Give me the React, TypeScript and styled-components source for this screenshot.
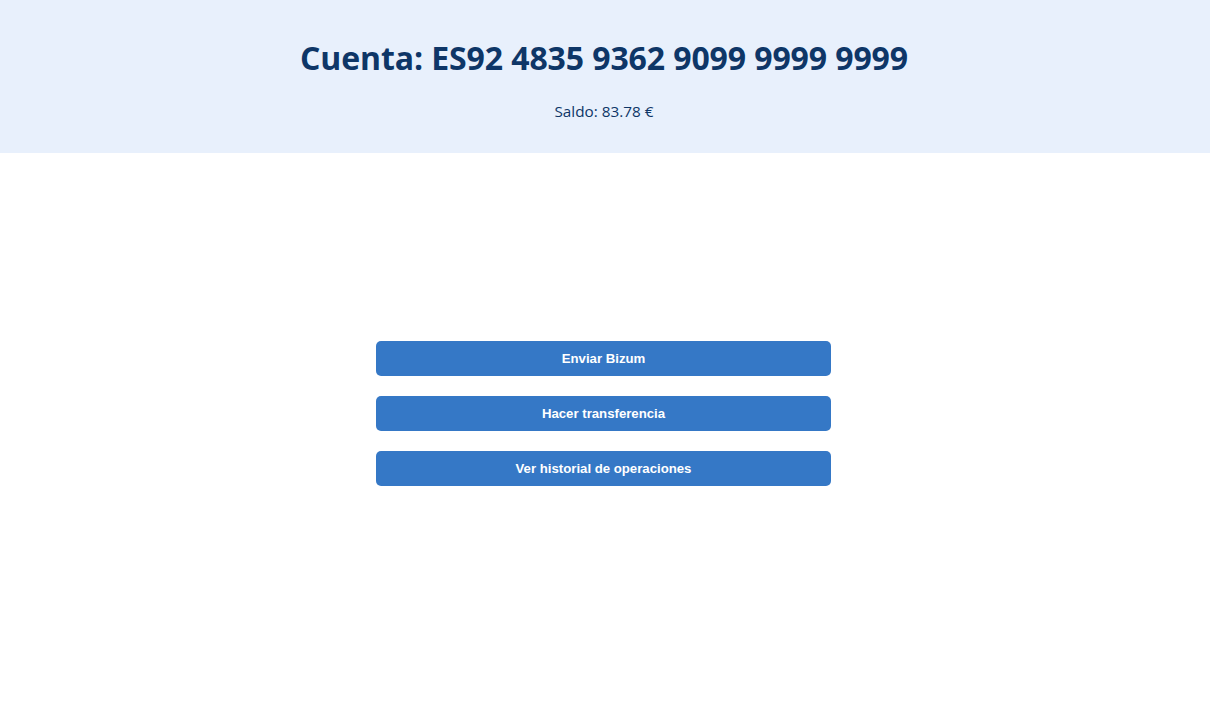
import React from "react";
import styled, { createGlobalStyle } from "styled-components";

const Global = createGlobalStyle`
  html, body { margin: 0; padding: 0; background: #ffffff; }
  body { font-family: "Open Sans", "Noto Sans", sans-serif; }
`;

const Header = styled.header`
  height: 153px;
  background: #e8f0fc;
  display: flex;
  flex-direction: column;
  align-items: center;
  box-sizing: border-box;
  padding-top: 38px;
  padding-right: 2px;
`;

const Title = styled.h1`
  margin: 0;
  font-family: "Open Sans", "Noto Sans", sans-serif;
  font-weight: 700;
  font-size: 32px;
  line-height: 40px;
  color: #0e3667;
  letter-spacing: -0.1px;
`;

const Balance = styled.p`
  margin: 23px 0 0;
  font-family: "Open Sans", "Noto Sans", sans-serif;
  font-size: 15.3px;
  line-height: 20px;
  color: #0e3667;
`;

const Main = styled.main`
  display: flex;
  flex-direction: column;
  align-items: center;
  gap: 20px;
  padding-top: 188px;
  padding-right: 3px;
`;

const ActionButton = styled.button`
  width: 455px;
  height: 35px;
  border: none;
  border-radius: 5px;
  background: #3578c6;
  color: #ffffff;
  font-family: "Liberation Sans", Arial, sans-serif;
  font-weight: 700;
  font-size: 13.2px;
  cursor: pointer;
`;

export default function App() {
  return (
    <>
      <Global />
      <Header>
        <Title>Cuenta: ES92 4835 9362 9099 9999 9999</Title>
        <Balance>Saldo: 83.78 €</Balance>
      </Header>
      <Main>
        <ActionButton>Enviar Bizum</ActionButton>
        <ActionButton>Hacer transferencia</ActionButton>
        <ActionButton>Ver historial de operaciones</ActionButton>
      </Main>
    </>
  );
}
